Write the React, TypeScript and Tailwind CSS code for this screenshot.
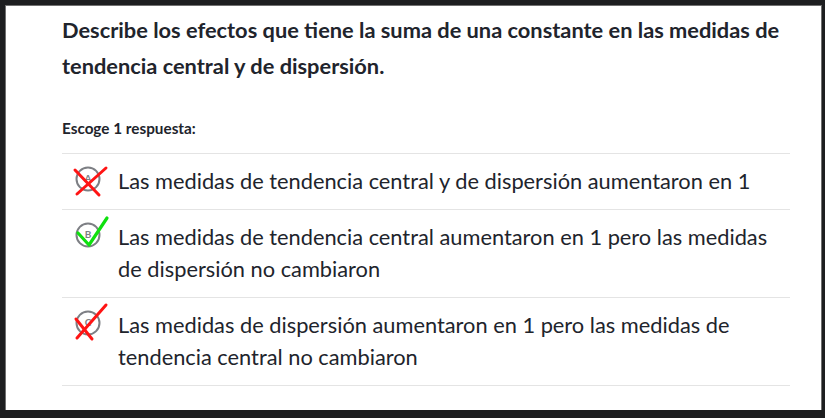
import React from 'react';

type Mark = 'wrong' | 'right' | 'wrong2';

interface Choice {
  letter: string;
  mark: Mark;
  text: string;
}

const choices: Choice[] = [
  {
    letter: 'A',
    mark: 'wrong',
    text: 'Las medidas de tendencia central y de dispersión aumentaron en 1',
  },
  {
    letter: 'B',
    mark: 'right',
    text: 'Las medidas de tendencia central aumentaron en 1 pero las medidas de dispersión no cambiaron',
  },
  {
    letter: 'C',
    mark: 'wrong2',
    text: 'Las medidas de dispersión aumentaron en 1 pero las medidas de tendencia central no cambiaron',
  },
];

const ChoiceIcon: React.FC<{ letter: string; mark: Mark }> = ({ letter, mark }) => (
  <svg width="40" height="40" viewBox="0 0 40 40" className="shrink-0 overflow-visible -mt-[6px]">
    {/* letter bubble */}
    <circle cx="18" cy="20" r="11.5" fill="white" stroke="#7d7f84" strokeWidth="2" />
    <text
      x="18"
      y="22.5"
      textAnchor="middle"
      fontSize="10"
      fontWeight="700"
      fill="#7d7f84"
      fontFamily="Lato, sans-serif"
    >
      {letter}
    </text>
    {mark === 'wrong' && (
      <g stroke="#ff1414" strokeWidth="3" strokeLinecap="round">
        <path d="M5 11 L29 36" />
        <path d="M36 9 L7 35" />
      </g>
    )}
    {mark === 'right' && (
      <path
        d="M8 18 L19 30 L37 3"
        fill="none"
        stroke="#0fe00f"
        strokeWidth="3.2"
        strokeLinecap="round"
        strokeLinejoin="round"
      />
    )}
    {mark === 'wrong2' && (
      <g stroke="#ff1414" strokeWidth="3" strokeLinecap="round">
        <path d="M36 2 L7 35" />
        <path d="M6 16 L22 36" />
      </g>
    )}
  </svg>
);

export default function App() {
  return (
    <div className="w-[825px] h-[418px] bg-[#1d1e20] pt-[5px] pl-[5px] pr-[3px] pb-[8px]">
      <div
        className="h-full bg-white border-l border-t border-r border-[#707070] pl-[56px] pr-[31px] pt-[6px] text-[#21242c]"
        style={{ fontFamily: 'Lato, "Noto Sans", sans-serif' }}
      >
        <h1 className="text-[21.8px] leading-[36px] font-bold">
          Describe los efectos que tiene la suma de una constante en las medidas de tendencia central y de dispersión.
        </h1>

        <div className="mt-[34px] text-[15.3px] leading-[20px] font-bold">Escoge 1 respuesta:</div>

        <ul className="mt-[15px] border-t border-[#e4e4e4]">
          {choices.map(c => (
            <li key={c.letter} className="flex items-start gap-[8px] pl-[8px] pt-[11px] pb-[12px] border-b border-[#e4e4e4]">
              <div className="w-[40px] h-[32px] shrink-0">
                <ChoiceIcon letter={c.letter} mark={c.mark} />
              </div>
              <span className="text-[21.8px] leading-[32px] pr-[10px]">{c.text}</span>
            </li>
          ))}
        </ul>
      </div>
    </div>
  );
}
